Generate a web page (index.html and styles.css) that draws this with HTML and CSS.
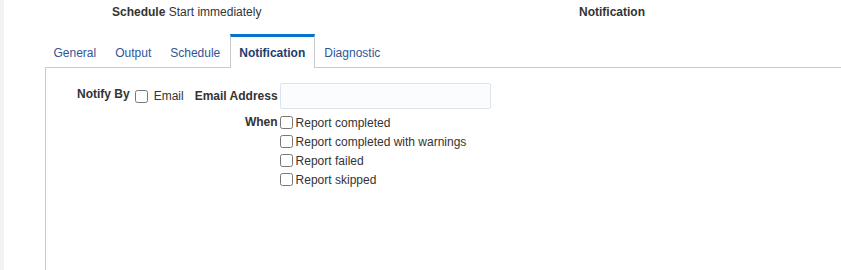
FILE: index.html
```html
<!DOCTYPE html>
<html>
<head>
<meta charset="utf-8">
<link rel="stylesheet" href="styles.css">
</head>
<body>
<div class="shell">
  <div class="rail"></div>
  <div class="main">
    <div class="summary">
      <div class="sum-left"><span class="sum-label">Schedule</span> <span class="sum-value">Start immediately</span></div>
      <div class="sum-right"><span class="sum-label">Notification</span></div>
    </div>
    <div class="tabs">
      <div class="tab">General</div>
      <div class="tab">Output</div>
      <div class="tab">Schedule</div>
      <div class="tab active">Notification</div>
      <div class="tab">Diagnostic</div>
    </div>
    <div class="panel">
      <div class="form">
        <div class="lbl notify">Notify By</div>
        <label class="opt email"><input type="checkbox" class="cb"><span>Email</span></label>
        <div class="lbl addr">Email Address</div>
        <input type="text" class="field">
        <div class="lbl when">When</div>
        <div class="options">
          <label class="opt row"><input type="checkbox" class="cb"><span>Report completed</span></label>
          <label class="opt row"><input type="checkbox" class="cb"><span>Report completed with warnings</span></label>
          <label class="opt row"><input type="checkbox" class="cb"><span>Report failed</span></label>
          <label class="opt row"><input type="checkbox" class="cb"><span>Report skipped</span></label>
        </div>
      </div>
    </div>
  </div>
</div>
</body>
</html>
```
FILE: styles.css
```css
html, body {
  margin: 0;
  padding: 0;
  background: #ffffff;
  height: 100%;
  overflow: hidden;
}
body {
  font-family: "Liberation Sans", Arial, sans-serif;
  font-size: 12px;
  color: #333333;
}
.shell {
  display: flex;
  height: 270px;
}
.rail {
  width: 4px;
  background: #f2f2f2;
  flex: none;
}
.main {
  flex: 1;
  display: flex;
  flex-direction: column;
  min-width: 0;
}
.summary {
  display: flex;
  height: 34px;
  align-items: flex-start;
}
.sum-left {
  padding-left: 108px;
  padding-top: 5px;
  line-height: 14px;
  width: 467px;
}
.sum-right {
  padding-top: 5px;
  line-height: 14px;
}
.sum-label {
  font-weight: bold;
}
.tabs {
  display: flex;
  padding-left: 40px;
  position: relative;
  z-index: 1;
}
.tab {
  border: 1px solid transparent;
  border-top: 3px solid transparent;
  border-bottom: none;
  padding: 2px 8.5px 0;
  line-height: 28px;
  height: 28px;
  color: #2f5597;
}
.tab.active {
  border-color: #c6cbd2;
  border-top-color: #0572ce;
  background: #ffffff;
  font-weight: bold;
  color: #243c6b;
  height: 29px;
  margin-bottom: -1px;
}
.panel {
  flex: 1;
  margin-left: 41px;
  border-top: 1px solid #c6cbd2;
  border-left: 1px solid #c6cbd2;
}
.form {
  display: grid;
  grid-template-columns: auto auto auto auto;
  justify-content: start;
  align-items: center;
  padding: 15px 0 0 31px;
}
.lbl {
  font-weight: bold;
}
.notify {
  align-self: start;
  padding-top: 4px;
  margin-right: 5px;
}
.addr {
  margin-left: 11px;
  margin-right: 2px;
  justify-self: end;
}
.when {
  grid-column: 3;
  justify-self: end;
  align-self: start;
  margin-right: 2px;
  line-height: 19px;
  margin-top: 4px;
}
.opt {
  display: flex;
  align-items: center;
}
.cb {
  margin: 0;
  width: 13px;
  height: 13px;
  flex: none;
}
.email span {
  margin-left: 6px;
}
.field {
  box-sizing: border-box;
  width: 211px;
  height: 26px;
  margin: 0;
  border: 1px solid #dfe4ea;
  border-radius: 2px;
  background: #fbfcfe;
  font: inherit;
  padding: 0 6px;
}
.options {
  grid-column: 4;
  margin-top: 4px;
  display: flex;
  flex-direction: column;
}
.row {
  height: 19px;
}
.row span {
  margin-left: 3px;
}
```
